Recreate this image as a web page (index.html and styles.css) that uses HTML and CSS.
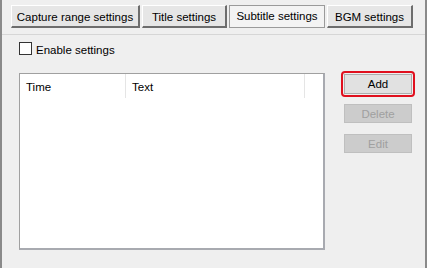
FILE: index.html
```html
<!DOCTYPE html>
<html lang="en">
<head>
    <meta charset="UTF-8">
    <title>Subtitle settings</title>
    <link rel="stylesheet" href="styles.css">
</head>
<body>
    <div class="window">
        <div class="tab-bar">
            <div class="tab tab-capture">Capture range settings</div>
            <div class="tab tab-title">Title settings</div>
            <div class="tab tab-subtitle selected">Subtitle settings</div>
            <div class="tab tab-bgm">BGM settings</div>
        </div>

        <div class="panel">
            <label class="check-row">
                <span class="checkbox"></span>
                <span class="check-label">Enable settings</span>
            </label>

            <div class="body-row">
                <div class="list-box">
                    <div class="list-header">
                        <div class="col col-time">Time</div>
                        <div class="col col-text">Text</div>
                        <div class="col col-rest"></div>
                    </div>
                </div>

                <div class="buttons">
                    <div class="focus-ring">
                        <button class="btn">Add</button>
                    </div>
                    <button class="btn btn-delete" disabled>Delete</button>
                    <button class="btn btn-edit" disabled>Edit</button>
                </div>
            </div>
        </div>
    </div>
</body>
</html>
```

FILE: styles.css
```css
body {
    margin: 0;
    background-color: #f0f0f0;
    font-family: "Liberation Sans", "DejaVu Sans", sans-serif;
    font-size: 11.5px;
    color: #000;
}
.window {
    width: 427px;
    height: 268px;
    box-sizing: border-box;
    border-left: 2px solid #8a8a8a;
    border-right: 2px solid #8a8a8a;
    background-color: #efefef;
}
.tab-bar {
    display: flex;
    gap: 2px;
    padding: 5px 0 0 9px;
    height: 35px;
    box-sizing: border-box;
    border-bottom: 1px solid #d6d6d6;
}
.tab {
    height: 23px;
    line-height: 22px;
    text-align: center;
    box-sizing: border-box;
    background-color: #e6e6e6;
    border-top: 1px solid #ffffff;
    border-left: 1px solid #ffffff;
    border-right: 2px solid #6d6d6d;
    border-bottom: 2px solid #6d6d6d;
    white-space: nowrap;
}
.tab-capture {
    width: 129px;
}
.tab-title {
    width: 85px;
}
.tab-subtitle {
    width: 96px;
}
.tab-bgm {
    width: 86px;
}
.tab.selected {
    background-color: #f3f3f3;
    border: 1px solid #9a9a9a;
    line-height: 21px;
}
.panel {
    padding: 7px 0 0 17px;
}
.check-row {
    display: flex;
    align-items: center;
    gap: 4px;
    height: 13px;
}
.check-label {
    padding-top: 2px;
}
.checkbox {
    width: 11px;
    height: 11px;
    border: 1px solid #333;
    background-color: #fff;
}
.body-row {
    display: flex;
    margin-top: 16px;
}
.list-box {
    width: 306px;
    height: 177px;
    box-sizing: border-box;
    border: 1px solid #a0a0a0;
    border-bottom: 2px solid #a8aab0;
    border-right: 2px solid #a8aab0;
    background-color: #fff;
    margin-top: 2px;
}
.list-header {
    display: flex;
    height: 24px;
}
.col {
    padding: 7px 0 0 6px;
    border-right: 1px solid #e5e5e5;
}
.col-time {
    width: 99px;
}
.col-text {
    width: 172px;
}
.col-rest {
    border-right: none;
}
.buttons {
    display: flex;
    flex-direction: column;
    align-items: center;
    margin-left: 16px;
}
.focus-ring {
    border: 2px solid #e0101e;
    border-radius: 4px;
    padding: 1px;
}
.btn {
    width: 68px;
    height: 19px;
    padding: 0;
    font-family: inherit;
    font-size: 11.5px;
    color: #000;
    background-color: #e1e1e1;
    border: 1px solid #adadad;
}
.focus-ring .btn {
    height: 20px;
}
.btn-delete {
    margin-top: 7px;
}
.btn-edit {
    margin-top: 11px;
}
.btn:disabled {
    color: #a0a0a0;
    background-color: #cccccc;
    border-color: #bfbfbf;
}
```
